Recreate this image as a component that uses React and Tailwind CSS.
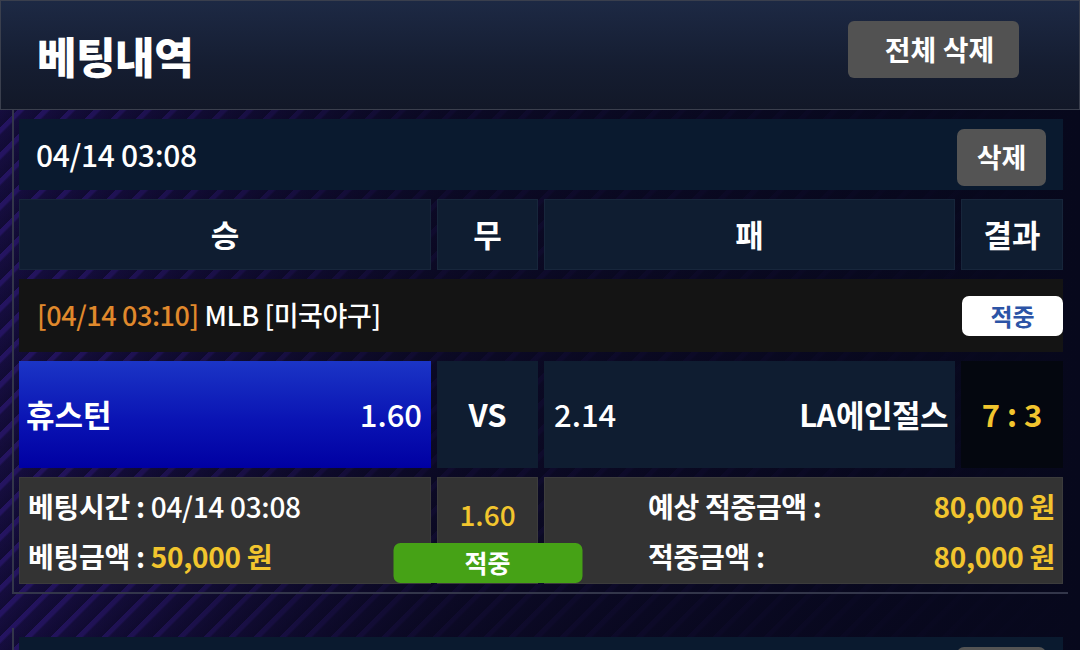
import { useState } from "react";

const FONT = { fontFamily: '"Noto Sans CJK KR", "Noto Sans", sans-serif' };

const bet = {
  betAt: "04/14 03:08",
  gameAt: "04/14 03:10",
  league: "MLB [미국야구]",
  home: "휴스턴",
  homeOdds: "1.60",
  away: "LA에인절스",
  awayOdds: "2.14",
  score: "7 : 3",
  pickOdds: "1.60",
  amount: "50,000 원",
  expected: "80,000 원",
  won: "80,000 원",
};

const BetCard = ({ item, onDelete }) => {
  return (
    <div className="mx-[12px] border-l-2 border-b-2 border-[#33364a] pl-[5px] pr-[5px] pt-[9px] pb-[8px] flex flex-col gap-[9px]">
      {/* top row */}
      <div className="h-[71px] bg-[#0a1a2f] flex items-center justify-between pl-[17px] pr-[17px]">
        <span className="text-white text-[30px] font-medium tracking-[-0.3px]">{item.betAt}</span>
        <button
          onClick={onDelete}
          className="h-[57px] w-[89px] mt-[6px] rounded-[7px] bg-[#545454] text-white text-[27px] font-bold"
        >
          삭제
        </button>
      </div>

      {/* header */}
      <div className="grid grid-cols-[412px_101px_411px_102px] gap-[6px] h-[71px]">
        {["승", "무", "패", "결과"].map((t) => (
          <div
            key={t}
            className="bg-[#0f1d31] border border-[#17263b] flex items-center justify-center text-white text-[31px] font-bold"
          >
            {t}
          </div>
        ))}
      </div>

      {/* league row */}
      <div className="h-[73px] bg-[#141414] flex items-center justify-between pl-[18px]">
        <span className="text-[27px] font-medium tracking-[-0.4px]">
          <span className="text-[#e0892c]">[{item.gameAt}]</span>
          <span className="text-white"> {item.league}</span>
        </span>
        <span className="h-[40px] w-[101px] rounded-[7px] bg-white text-[#2c54a6] text-[24px] font-bold flex items-center justify-center">
          적중
        </span>
      </div>

      {/* teams */}
      <div className="grid grid-cols-[412px_101px_411px_102px] gap-[6px] h-[107px]">
        <div className="bg-[linear-gradient(180deg,#1b35c6_0%,#0a14b4_55%,#0000a2_100%)] flex items-center justify-between pl-[7px] pr-[9px] text-white text-[31px] font-bold">
          <span>{item.home}</span>
          <span className="font-medium">{item.homeOdds}</span>
        </div>
        <div className="bg-[#0f1d31] flex items-center justify-center text-white text-[31px] font-bold">VS</div>
        <div className="bg-[#0f1d31] flex items-center justify-between pl-[10px] pr-[7px] text-white text-[31px] font-bold">
          <span className="font-medium">{item.awayOdds}</span>
          <span className="tracking-[-0.5px]">{item.away}</span>
        </div>
        <div className="bg-[#04070f] flex items-center justify-center text-[#f2c52e] text-[31px] font-bold">
          {item.score}
        </div>
      </div>

      {/* detail */}
      <div className="grid grid-cols-[412px_101px_519px] gap-[6px] h-[107px]">
        <div className="bg-[#333333] border border-[#3c3c3c] flex flex-col justify-center gap-[6px] pl-[8px] text-[28px] font-bold text-white leading-[44px] tracking-[-0.3px]">
          <div>
            베팅시간 : <span className="font-medium">{item.betAt}</span>
          </div>
          <div>
            베팅금액 : <span className="text-[#f2c52e]">{item.amount}</span>
          </div>
        </div>
        <div className="relative bg-[#333333] border border-[#3c3c3c] flex justify-center pt-[16px]">
          <span className="text-[#f2c52e] text-[28px] font-medium leading-[40px]">{item.pickOdds}</span>
          <span className="absolute bottom-[0px] left-1/2 -translate-x-1/2 w-[189px] h-[40px] rounded-[7px] bg-[#46a216] text-white text-[25px] font-bold flex items-center justify-center">
            적중
          </span>
        </div>
        <div className="bg-[#333333] border border-[#3c3c3c] grid grid-cols-[1fr_auto] content-center gap-y-[6px] pl-[103px] pr-[7px] text-[28px] font-bold leading-[44px] tracking-[-0.3px]">
          <span className="text-white">예상 적중금액 :</span>
          <span className="text-[#f2c52e] text-right">{item.expected}</span>
          <span className="text-white">적중금액 :</span>
          <span className="text-[#f2c52e] text-right">{item.won}</span>
        </div>
      </div>
    </div>
  );
};

const App = () => {
  const [bets, setBets] = useState([bet, bet]);

  return (
    <div
      style={FONT}
      className="w-[1080px] h-[650px] overflow-hidden bg-[linear-gradient(90deg,rgba(8,8,28,0.25)_0%,rgba(8,8,28,0.8)_40%,#07081c_100%),repeating-linear-gradient(135deg,#2e1878_0px,#2e1878_4px,#1a0f4a_6px,#150c3e_18px)]"
    >
      <div className="h-[110px] border border-[#3a3f4d] bg-[linear-gradient(180deg,#1d2944_0%,#151d31_60%,#121828_100%)] flex items-center justify-between pl-[36px] pr-[60px]">
        <h1 className="text-white text-[43px] font-black tracking-[-0.5px]">베팅내역</h1>
        <button
          onClick={() => setBets([])}
          className="h-[57px] w-[171px] -mt-[12px] rounded-[6px] bg-[#525252] text-white text-[28px] font-bold pl-[12px]"
        >
          전체 삭제
        </button>
      </div>

      <div className="flex flex-col gap-[34px]">
        {bets.map((b, i) => (
          <BetCard key={i} item={b} onDelete={() => setBets(bets.filter((_, j) => j !== i))} />
        ))}
      </div>
    </div>
  );
};

export default App;
